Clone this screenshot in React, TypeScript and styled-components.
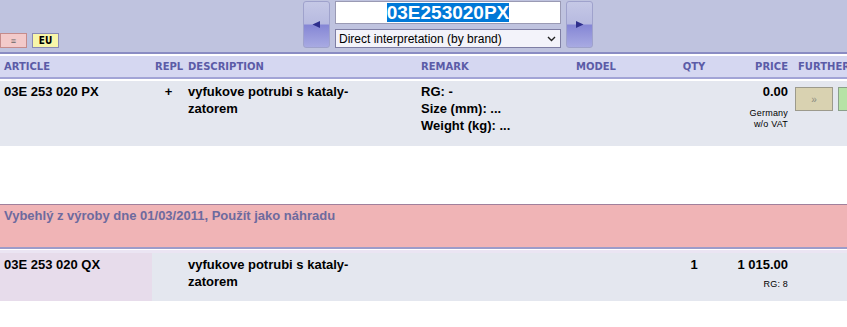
import React, {FC} from 'react';
import styled, {createGlobalStyle, css} from 'styled-components';

const cols = '152px 33px 233px 155px 87px 68px 67px 1fr';

const GlobalStyle = createGlobalStyle`
  html, body {
    margin: 0;
    padding: 0;
    background: white;
    overflow: hidden;
  }
  * {
    box-sizing: border-box;
  }
`;

const Page = styled.div`
  width: 895px;
  font-family: "Liberation Sans", Arial, sans-serif;
  color: black;
`;

const TopBar = styled.div`
  display: grid;
  grid-template-columns: 303px auto 1fr;
  height: 54px;
  padding-top: 1px;
  background: #bfc3df;
  border-bottom: 2px solid #8a8cc3;
`;

const LeftTools = styled.div`
  display: flex;
  gap: 5px;
  align-self: end;
  padding-bottom: 4px;
`;

const FlagButton = styled.div<{$tone: 'pink' | 'yellow'}>`
  display: flex;
  align-items: center;
  justify-content: center;
  width: 27px;
  height: 15px;
  ${p => p.$tone === 'pink' ? css`
    background: #f3caca;
    border: 1px solid #c58c8c;
    color: #666;
    font-size: 9px;
  ` : css`
    background: #f8f6a9;
    border: 1px solid #8a8ab4;
    color: black;
    font-family: "DejaVu Sans Condensed", "DejaVu Sans", sans-serif;
    font-weight: bold;
    font-size: 10px;
  `}
`;

const SearchGroup = styled.div`
  display: flex;
  gap: 5px;
  align-items: flex-start;
`;

const ArrowButton = styled.div`
  display: flex;
  align-items: center;
  justify-content: center;
  width: 27px;
  height: 47px;
  border: 1px solid #9fa2cc;
  border-radius: 3px;
  background: linear-gradient(to bottom, #c5c8e6 0%, #b7bae0 49%, #8586d5 51%, #a8aae2 100%);
`;

const SearchFields = styled.div`
  display: flex;
  flex-direction: column;
  gap: 5px;
  width: 226px;
`;

const SearchBox = styled.div`
  display: flex;
  justify-content: center;
  align-items: stretch;
  height: 23px;
  padding: 1px 0;
  background: white;
  border: 1px solid #9a9ab4;
`;

const Selected = styled.span`
  background: #0078d7;
  color: white;
  font-weight: bold;
  font-size: 19px;
  line-height: 20px;
`;

const ModeSelect = styled.div`
  display: flex;
  align-items: center;
  justify-content: space-between;
  height: 19px;
  padding: 0 4px 0 3px;
  background: #f3f3fa;
  border: 1px solid #7e7ea4;
  font-size: 12px;
`;

const HeaderRow = styled.div`
  display: grid;
  grid-template-columns: ${cols};
  height: 25px;
  margin-bottom: 2px;
  border-top: 2px solid white;
  border-bottom: 2px solid #a2a4d6;
  background: #d5d7f1;
`;

const HeadCell = styled.div<{$align?: 'left' | 'center' | 'right'}>`
  padding: 5px 3px 0;
  font-family: "DejaVu Sans", Verdana, sans-serif;
  font-weight: bold;
  font-size: 10px;
  color: #5b5ba7;
  white-space: nowrap;
  text-align: ${p => p.$align || 'left'};
  ${p => p.$align === 'right' && css`padding-right: 7px;`}
`;

const ItemRow = styled.div<{$replacement?: boolean}>`
  display: grid;
  grid-template-columns: ${cols};
  background: #e4e7ef;
  font-size: 13px;
  font-weight: bold;
  line-height: 17px;
  ${p => p.$replacement ? css`
    height: 51px;
    border-top: 3px solid #ebe5f3;
  ` : css`
    height: 65px;
  `}
`;

const Cell = styled.div<{$align?: 'left' | 'center' | 'right'; $tint?: boolean; $top?: number}>`
  padding: ${p => p.$top ?? 2}px 3px 0;
  text-align: ${p => p.$align || 'left'};
  ${p => p.$align === 'right' && css`padding-right: 7px;`}
  ${p => p.$tint && css`background: #e7dceb;`}
`;

const Fine = styled.div<{$gap: number}>`
  margin-top: ${p => p.$gap}px;
  font-size: 9px;
  font-weight: normal;
  line-height: 11px;
  letter-spacing: 0.2px;
`;

const Actions = styled.div`
  display: flex;
  gap: 5px;
  padding-top: 6px;
`;

const ActionButton = styled.div<{$tone: 'beige' | 'green'}>`
  display: flex;
  align-items: center;
  justify-content: center;
  width: 38px;
  height: 24px;
  font-size: 10px;
  font-weight: normal;
  color: #8a8a80;
  border: 1px solid ${p => p.$tone === 'beige' ? '#9c9a8c' : '#8aa08a'};
  background: ${p => p.$tone === 'beige' ? '#d9d2b1' : '#b6e3a6'};
`;

const Gap = styled.div`
  height: 58px;
`;

const Notice = styled.div`
  height: 45px;
  padding: 3px 4px 0;
  background: #f0b4b6;
  border-top: 1px solid #a0809c;
  border-bottom: 2px solid #9c9cca;
  font-size: 13px;
  font-weight: bold;
  line-height: 15px;
  color: #6d6a9e;
  margin-bottom: 1px;
`;

const Arrow: FC<{dir: 'left' | 'right'}> = ({dir}) => (
  <svg width="11" height="9" viewBox="0 0 11 9">
    <defs>
      <filter id={`soft-${dir}`} x="-30%" y="-30%" width="160%" height="160%">
        <feGaussianBlur stdDeviation="0.4"/>
      </filter>
    </defs>
    <polygon
      points={dir === 'left' ? '1.5,4.5 9,1 9,8' : '9.5,4.5 2,1 2,8'}
      fill="#2e2f8c"
      filter={`url(#soft-${dir})`}
    />
  </svg>
);

const Chevron: FC = () => (
  <svg width="9" height="6" viewBox="0 0 9 6">
    <polyline points="1,1 4.5,4.5 8,1" fill="none" stroke="#222" strokeWidth="1.4"/>
  </svg>
);

const App: FC = () => (
  <Page>
    <GlobalStyle/>
    <TopBar>
      <LeftTools>
        <FlagButton $tone="pink">≡</FlagButton>
        <FlagButton $tone="yellow">EU</FlagButton>
      </LeftTools>
      <SearchGroup>
        <ArrowButton><Arrow dir="left"/></ArrowButton>
        <SearchFields>
          <SearchBox><Selected>03E253020PX</Selected></SearchBox>
          <ModeSelect>
            <span>Direct interpretation (by brand)</span>
            <Chevron/>
          </ModeSelect>
        </SearchFields>
        <ArrowButton><Arrow dir="right"/></ArrowButton>
      </SearchGroup>
      <div/>
    </TopBar>

    <HeaderRow>
      <HeadCell style={{paddingLeft: 4}}>ARTICLE</HeadCell>
      <HeadCell>REPL</HeadCell>
      <HeadCell>DESCRIPTION</HeadCell>
      <HeadCell>REMARK</HeadCell>
      <HeadCell>MODEL</HeadCell>
      <HeadCell $align="center">QTY</HeadCell>
      <HeadCell $align="right">PRICE</HeadCell>
      <HeadCell>FURTHER</HeadCell>
    </HeaderRow>

    <ItemRow>
      <Cell style={{paddingLeft: 4}}>03E 253 020 PX</Cell>
      <Cell $align="center">+</Cell>
      <Cell>vyfukove potrubi s kataly-<br/>zatorem</Cell>
      <Cell>RG: -<br/>Size (mm): ...<br/>Weight (kg): ...</Cell>
      <Cell/>
      <Cell $align="center"/>
      <Cell $align="right">
        0.00
        <Fine $gap={8}>Germany<br/>w/o VAT</Fine>
      </Cell>
      <Cell style={{padding: 0}}>
        <Actions>
          <ActionButton $tone="beige">»</ActionButton>
          <ActionButton $tone="green"/>
        </Actions>
      </Cell>
    </ItemRow>

    <Gap/>

    <Notice>Vybehlý z výroby dne 01/03/2011, Použít jako náhradu</Notice>

    <ItemRow $replacement>
      <Cell $tint $top={3} style={{paddingLeft: 4}}>03E 253 020 QX</Cell>
      <Cell $top={3}/>
      <Cell $top={3}>vyfukove potrubi s kataly-<br/>zatorem</Cell>
      <Cell $top={3}/>
      <Cell $top={3}/>
      <Cell $top={3} $align="center">1</Cell>
      <Cell $top={3} $align="right">
        1 015.00
        <Fine $gap={6}>RG: 8</Fine>
      </Cell>
      <Cell/>
    </ItemRow>
  </Page>
);

export default App;
